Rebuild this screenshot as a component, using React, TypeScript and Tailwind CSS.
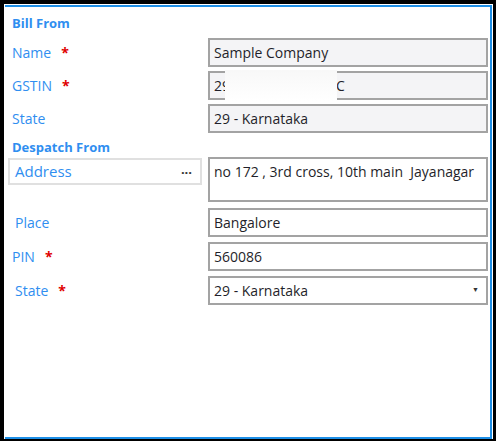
import React from 'react';

const font = { fontFamily: '"Open Sans", "Noto Sans", Arial, sans-serif' };

function Label({ text, required, indent }: { text: string; required?: boolean; indent?: boolean }) {
  return (
    <div className={`flex items-center text-[14px] text-[#2f8ef0] ${indent ? 'pl-[10px]' : 'pl-[7px]'}`}>
      <span>{text}</span>
      {required && <span className="ml-[10px] text-[#e00000] font-bold">*</span>}
    </div>
  );
}

function Field({ children, className = '' }: { children: React.ReactNode; className?: string }) {
  return (
    <div
      className={`relative flex items-center h-[29px] border-2 border-[#a3a3a3] bg-[#f4f4f6] px-[4px] text-[14px] text-[#1f1f2a] ${className}`}
    >
      {children}
    </div>
  );
}

export default function App() {
  return (
    <div className="w-[496px] h-[441px] bg-black pl-[4px] pt-[4px] pr-[3px] pb-[2px]" style={font}>
      <div className="h-full bg-white pl-[1px] pt-[1px] pr-[1px]">
        <div className="h-full border-t-2 border-r-2 border-b-2 border-[#1e8fe6] pr-[2px]">
          {/* Bill From */}
          <div className="pl-[7px] pt-[7px] h-[31px] text-[13px] font-bold text-[#2f8ef0]">Bill From</div>

          <div className="grid grid-cols-[203px_1fr] gap-y-[4px]">
            <Label text="Name" required />
            <Field>Sample Company</Field>

            <Label text="GSTIN" required />
            <Field>
              <span>29</span>
              <span className="absolute left-[15px] top-[-3px] w-[112px] h-[31px] bg-gradient-to-b from-[#f8f8f8] to-white" />
              <span className="ml-[106px]">C</span>
            </Field>

            <Label text="State" />
            <Field>29 - Karnataka</Field>
          </div>

          {/* Despatch From */}
          <div className="pl-[7px] pt-[5px] h-[24px] text-[13px] font-bold text-[#2f8ef0]">Despatch From</div>

          <div className="grid grid-cols-[203px_1fr]">
            <div className="pl-[3px] pr-[6px] pt-[1px]">
              <div className="flex items-center justify-between h-[27px] border-2 border-[#e0e0e0] pl-[5px] pr-[8px]">
                <span className="text-[15px] text-[#2f8ef0]">Address</span>
                <span className="text-[13px] font-bold text-[#333] leading-none pb-[4px]">...</span>
              </div>
            </div>
            <div className="h-[45px] border-2 border-[#a3a3a3] bg-white px-[4px] pt-[2px] text-[14px] text-[#1f1f2a] whitespace-pre">
              no 172 , 3rd cross, 10th main  Jayanagar
            </div>
          </div>

          <div className="grid grid-cols-[203px_1fr] gap-y-[5px] mt-[6px]">
            <Label text="Place" indent />
            <Field className="bg-white">Bangalore</Field>

            <Label text="PIN" required />
            <Field className="bg-white">560086</Field>

            <Label text="State" required indent />
            <Field className="bg-white justify-between pr-[7px]">
              <span>29 - Karnataka</span>
              <span className="text-[7px] text-[#333]">▼</span>
            </Field>
          </div>
        </div>
      </div>
    </div>
  );
}
